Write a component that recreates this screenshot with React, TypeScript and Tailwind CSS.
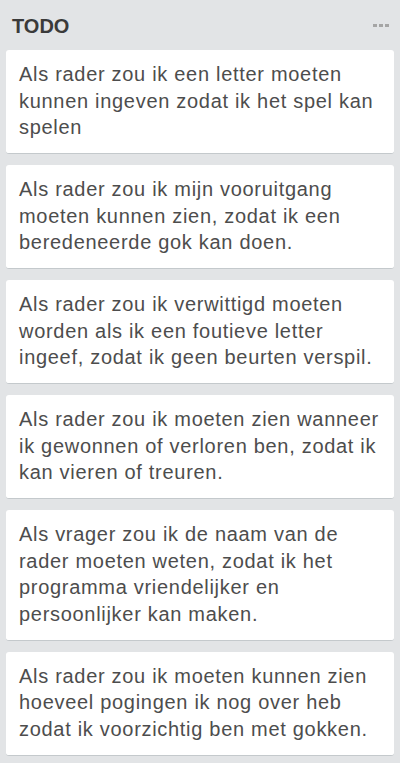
const cards = [
  "Als rader zou ik een letter moeten kunnen ingeven zodat ik het spel kan spelen",
  "Als rader zou ik mijn vooruitgang moeten kunnen zien, zodat ik een beredeneerde gok kan doen.",
  "Als rader zou ik verwittigd moeten worden als ik een foutieve letter ingeef, zodat ik geen beurten verspil.",
  "Als rader zou ik moeten zien wanneer ik gewonnen of verloren ben, zodat ik kan vieren of treuren.",
  "Als vrager zou ik de naam van de rader moeten weten, zodat ik het programma vriendelijker en persoonlijker kan maken.",
  "Als rader zou ik moeten kunnen zien hoeveel pogingen ik nog over heb zodat ik voorzichtig ben met gokken.",
];

export default function App() {
  return (
    <div className="w-[400px] h-[763px] overflow-hidden bg-[#e2e4e6] [font-family:'Liberation_Sans',Arial,sans-serif]">
      {/* List header */}
      <div className="flex items-center justify-between h-[50px] pl-3 pr-[11px]">
        <h2 className="text-[20px] font-bold text-[#3a3a3a] leading-none pt-[1px]">TODO</h2>
        <div className="flex gap-[2px] items-center">
          <span className="w-[4px] h-[3px] bg-[#a5a5a5]" />
          <span className="w-[4px] h-[3px] bg-[#a5a5a5]" />
          <span className="w-[4px] h-[3px] bg-[#a5a5a5]" />
        </div>
      </div>

      {/* Cards */}
      <div className="flex flex-col gap-[11px] px-[6px]">
        {cards.map((text, i) => (
          <div
            key={i}
            className="bg-white rounded-[3px] border-b border-[#c4c9cc] pl-[13px] pr-2 pt-[11px] pb-[12.5px] text-[20px] leading-[26.5px] tracking-[0.7px] text-[#4d4d4d]"
          >
            {text}
          </div>
        ))}
      </div>
    </div>
  );
}
